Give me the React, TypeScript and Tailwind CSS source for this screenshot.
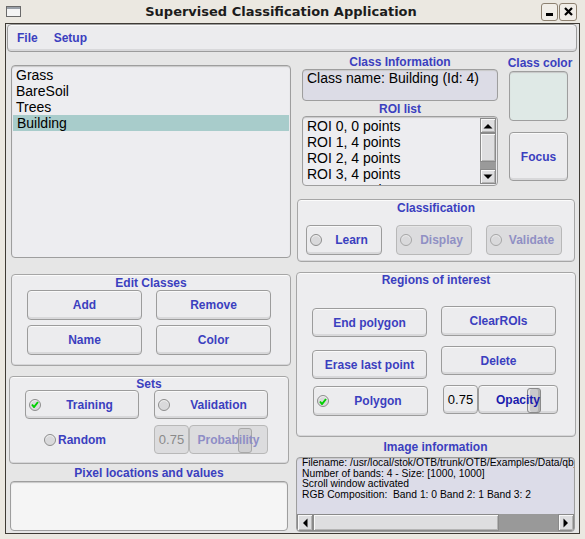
import type { ReactNode } from 'react'

// FLTK "plastic" look: rounded gray boxes, bold blue labels
const raised =
  'rounded-[4px] border border-[#9c9c9c] bg-[#ececee] shadow-[inset_0_1px_0_#fafafa,inset_0_-2px_0_#d8d8da]'
const sunken = 'rounded-[4px] border border-[#9e9e9e] shadow-[inset_0_1px_1px_#c8c8c8]'
const group =
  'rounded-[4px] border border-[#a6a6a6] bg-[#ededef] shadow-[inset_0_1px_0_#fbfbfb,inset_0_-1px_0_#d6d6d8]'
const label = 'text-[12px] font-bold leading-none text-[#3b3fbf]'

function Check() {
  return (
    <svg width="8" height="7" viewBox="0 0 8 7">
      <polyline points="1,3.5 3,6 7,1" fill="none" stroke="#00d000" strokeWidth="2" />
    </svg>
  )
}

function Light({ checked }: { checked?: boolean }) {
  return (
    <span className="flex h-[12px] w-[12px] shrink-0 items-center justify-center rounded-full border border-[#8e8e8e] bg-[#d9d9db] shadow-[inset_0_1px_1px_#f4f4f4]">
      {checked && <Check />}
    </span>
  )
}

interface BtnProps {
  text: string
  className?: string
  light?: boolean
  checked?: boolean
  disabled?: boolean
}

function Btn({ text, className = '', light, checked, disabled }: BtnProps) {
  return (
    <div
      className={`flex items-center text-[12px] font-bold ${
        disabled
          ? 'rounded-[4px] border border-[#b8b8b8] bg-[#dcdcde] text-[#9090c4] shadow-[inset_0_1px_0_#e6e6e6]'
          : `${raised} text-[#3b3fbf]`
      } ${className}`}
    >
      {light && (
        <span className={`ml-[3px] ${disabled ? 'opacity-70' : ''}`}>
          <Light checked={checked} />
        </span>
      )}
      <span className="flex-1 text-center">{text}</span>
    </div>
  )
}

function ValueSlider({ name, disabled, sliderW }: { name: string; disabled?: boolean; sliderW: string }) {
  return (
    <div className="flex h-[29px]">
      <div
        className={`flex w-[35px] items-center justify-center text-[13px] ${
          disabled
            ? 'rounded-[4px] border border-[#b8b8b8] bg-[#dcdcde] text-[#8a8a8a]'
            : `${raised} text-black`
        }`}
      >
        0.75
      </div>
      <div
        className={`relative flex items-center justify-center text-[12px] font-bold ${sliderW} ${
          disabled
            ? 'rounded-[4px] border border-[#b8b8b8] bg-[#dcdcde] text-[#8e8ec6]'
            : `${raised} text-[#1c1cad]`
        }`}
      >
        <span
          className={`absolute left-[48px] top-[2px] h-[25px] w-[14px] rounded-[3px] border ${
            disabled
              ? 'border-[#a8a8a8] bg-[#cfcfd1]'
              : 'border-[#8a8a8a] bg-[#c9c9cb] shadow-[inset_2px_0_0_#e4e4e4,inset_-2px_0_0_#b0b0b0]'
          }`}
        />
        <span className="relative">{name}</span>
      </div>
    </div>
  )
}

function Arrow({ dir }: { dir: 'up' | 'down' | 'left' | 'right' }) {
  if (dir === 'up' || dir === 'down') {
    return (
      <svg width="10" height="6" viewBox="0 0 10 6">
        <polygon points={dir === 'up' ? '0.5,5.5 5,1 9.5,5.5' : '0.5,0.5 5,5 9.5,0.5'} fill="#000" />
      </svg>
    )
  }
  return (
    <svg width="6" height="10" viewBox="0 0 6 10">
      <polygon points={dir === 'left' ? '5.5,0.5 1,5 5.5,9.5' : '0.5,0.5 5,5 0.5,9.5'} fill="#000" />
    </svg>
  )
}

const scrollBox =
  'flex items-center justify-center border border-[#8a8a8a] bg-[#dedee0] shadow-[inset_1px_1px_0_#f8f8f8,inset_-1px_-1px_0_#b4b4b4]'

function Section({ title, className, children }: { title: string; className: string; children: ReactNode }) {
  return (
    <div className={`${group} ${className}`}>
      <div className={`flex h-[14px] items-center justify-center ${label}`}>{title}</div>
      {children}
    </div>
  )
}

function TitleBar() {
  return (
    <div className="flex h-[23px] shrink-0 items-center">
      <div className="ml-[6px] flex h-[11px] w-[15px] flex-col border border-[#6a6a6a] bg-[#f4f4f4]">
        <div className="h-[2px] bg-[#9aa0a8]" />
      </div>
      <div className="flex-1 text-center font-['DejaVu_Sans',sans-serif] text-[13px] font-bold text-[#1c1c1c]">
        Supervised Classification Application
      </div>
      <div className="mr-[8px] flex gap-[1px]">
        <div className="flex h-[18px] w-[17px] items-end justify-center rounded-[3px] border border-[#8d8170] bg-[#f1eee8] pb-[4px]">
          <div className="h-[3px] w-[7px] bg-black" />
        </div>
        <div className="flex h-[18px] w-[18px] items-center justify-center rounded-[3px] border border-[#8d8170] bg-[#f1eee8]">
          <svg width="9" height="9" viewBox="0 0 9 9">
            <path d="M1 1 L8 8 M8 1 L1 8" stroke="#000" strokeWidth="2.2" />
          </svg>
        </div>
      </div>
    </div>
  )
}

function LeftColumn() {
  const classes = ['Grass', 'BareSoil', 'Trees', 'Building']
  return (
    <div className="flex w-[286px] shrink-0 flex-col">
      <div className={`${sunken} ml-[5px] mt-[13px] h-[193px] w-[280px] bg-[#ededf0] pt-[1px]`}>
        {classes.map((c) => (
          <div
            key={c}
            className={`h-[16px] pl-[4px] text-[14px] leading-[16px] text-black ${
              c === 'Building' ? 'ml-[1px] mr-[1px] bg-[#a8cccb] pl-[3px]' : ''
            }`}
          >
            {c}
          </div>
        ))}
      </div>

      <Section title="Edit Classes" className="ml-[5px] mt-[16px] h-[92px] w-[280px] pt-[1px]">
        <div className="flex gap-[14px] pl-[15px]">
          <Btn text="Add" className="h-[30px] w-[115px]" />
          <Btn text="Remove" className="h-[30px] w-[115px]" />
        </div>
        <div className="mt-[5px] flex gap-[14px] pl-[15px]">
          <Btn text="Name" className="h-[30px] w-[115px]" />
          <Btn text="Color" className="h-[30px] w-[115px]" />
        </div>
      </Section>

      <div className={`${group} ml-[3px] mt-[10px] h-[88px] w-[280px]`}>
        <div className={`flex h-[13px] items-center justify-center ${label}`}>Sets</div>
        <div className="flex gap-[15px] pl-[15px]">
          <Btn text="Training" light checked className="h-[29px] w-[114px]" />
          <Btn text="Validation" light className="h-[29px] w-[114px]" />
        </div>
        <div className="mt-[6px] flex gap-[15px] pl-[15px]">
          <div className="flex h-[29px] w-[114px] items-center pl-[19px]">
            <Light />
            <span className={`ml-[2px] ${label}`}>Random</span>
          </div>
          <ValueSlider name="Probability" disabled sliderW="w-[79px]" />
        </div>
      </div>

      <div className={`ml-[4px] flex h-[17px] w-[278px] items-center justify-center ${label}`}>
        Pixel locations and values
      </div>
      <div className={`${sunken} ml-[4px] h-[50px] w-[278px] bg-[#f5f5f5]`} />
    </div>
  )
}

function RightColumn() {
  const rois = ['ROI 0, 0 points', 'ROI 1, 4 points', 'ROI 2, 4 points', 'ROI 3, 4 points', 'ROI 4, 4 points']
  return (
    <div className="flex w-[286px] shrink-0 flex-col">
      <div className="mt-[3px] flex items-start">
        <div className="ml-[10px] flex w-[196px] flex-col">
          <div className={`flex h-[14px] items-center justify-center ${label}`}>Class Information</div>
          <div className={`${sunken} h-[32px] bg-[#dcdce6] pl-[4px] text-[14px] leading-[16px] text-black`}>
            Class name: Building (Id: 4)
          </div>
          <div className={`flex h-[15px] items-center justify-center ${label}`}>ROI list</div>
          <div className={`${sunken} flex h-[70px] overflow-hidden bg-[#ededf0]`}>
            <div className="flex-1 pl-[4px] pt-[1px] text-[14px] leading-[16px] text-black">
              {rois.map((r) => (
                <div key={r} className="h-[16px] whitespace-nowrap">
                  {r}
                </div>
              ))}
            </div>
            <div className="mr-[1px] flex w-[16px] flex-col py-[1px]">
              <div className={`${scrollBox} h-[15px]`}>
                <Arrow dir="up" />
              </div>
              <div className={`${scrollBox} h-[29px] bg-[#c9c9cb]`} />
              <div className="h-[7px] bg-[#9a9a9a]" />
              <div className={`${scrollBox} h-[15px]`}>
                <Arrow dir="down" />
              </div>
            </div>
          </div>
        </div>
        <div className="ml-[9px] flex w-[66px] flex-col">
          <div className={`flex h-[16px] items-center justify-center ${label}`}>Class color</div>
          <div className={`${sunken} ml-[2px] h-[50px] w-[59px] bg-[#dfe9e6]`} />
          <Btn text="Focus" className="ml-[2px] mt-[11px] h-[49px] w-[59px]" />
        </div>
      </div>

      <Section title="Classification" className="ml-[5px] mt-[13px] h-[63px] w-[278px] pt-[1px]">
        <div className="mt-[10px] flex gap-[14px] pl-[8px]">
          <Btn text="Learn" light className="h-[30px] w-[76px]" />
          <Btn text="Display" light disabled className="h-[30px] w-[76px]" />
          <Btn text="Validate" light disabled className="h-[30px] w-[76px]" />
        </div>
      </Section>

      <Section title="Regions of interest" className="ml-[4px] mt-[10px] h-[165px] w-[280px]">
        <div className="flex items-start">
          <div className="ml-[15px] flex w-[116px] flex-col">
            <Btn text="End polygon" className="mt-[21px] h-[29px] w-[115px]" />
            <Btn text="Erase last point" className="mt-[13px] h-[29px] w-[115px]" />
            <Btn text="Polygon" light checked className="ml-[1px] mt-[7px] h-[30px] w-[115px]" />
          </div>
          <div className="ml-[13px] flex flex-col">
            <Btn text="ClearROIs" className="mt-[19px] h-[30px] w-[115px]" />
            <Btn text="Delete" className="mt-[10px] h-[29px] w-[115px]" />
            <div className="ml-[2px] mt-[10px]">
              <ValueSlider name="Opacity" sliderW="w-[80px]" />
            </div>
          </div>
        </div>
      </Section>

      <div className={`ml-[4px] flex h-[20px] w-[279px] items-center justify-center ${label}`}>
        Image information
      </div>
      <div className={`${sunken} ml-[4px] flex h-[75px] w-[279px] flex-col overflow-hidden bg-[#dcdce8]`}>
        <div className="flex-1 overflow-hidden whitespace-nowrap pl-[5px] text-[10.3px] leading-[10.5px] text-black">
          <div>Filename: /usr/local/stok/OTB/trunk/OTB/Examples/Data/qb_RoadExtract.tif</div>
          <div>Number of bands: 4 - Size: [1000, 1000]</div>
          <div>Scroll window activated</div>
          <div>RGB Composition:&nbsp; Band 1: 0 Band 2: 1 Band 3: 2</div>
        </div>
        <div className="flex h-[17px]">
          <div className={`${scrollBox} w-[16px]`}>
            <Arrow dir="left" />
          </div>
          <div className={`${scrollBox} w-[186px] bg-[#cfcfd1]`} />
          <div className="flex-1 bg-[#999999]" />
          <div className={`${scrollBox} w-[16px]`}>
            <Arrow dir="right" />
          </div>
        </div>
      </div>
    </div>
  )
}

export default function App() {
  return (
    <div className="flex h-[539px] w-[585px] flex-col overflow-hidden bg-[#ebe8e1] font-['Liberation_Sans',Arial,sans-serif]">
      <TitleBar />
      <div className="ml-[5px] h-[511px] w-[575px] border border-[#3f3b35] bg-[#e6e6e6]">
        <div className={`${raised} ml-[1px] flex h-[28px] w-[570px] items-center gap-[16px] pl-[9px] ${label}`}>
          <span>File</span>
          <span>Setup</span>
        </div>
        <div className="flex">
          <LeftColumn />
          <RightColumn />
        </div>
      </div>
    </div>
  )
}
